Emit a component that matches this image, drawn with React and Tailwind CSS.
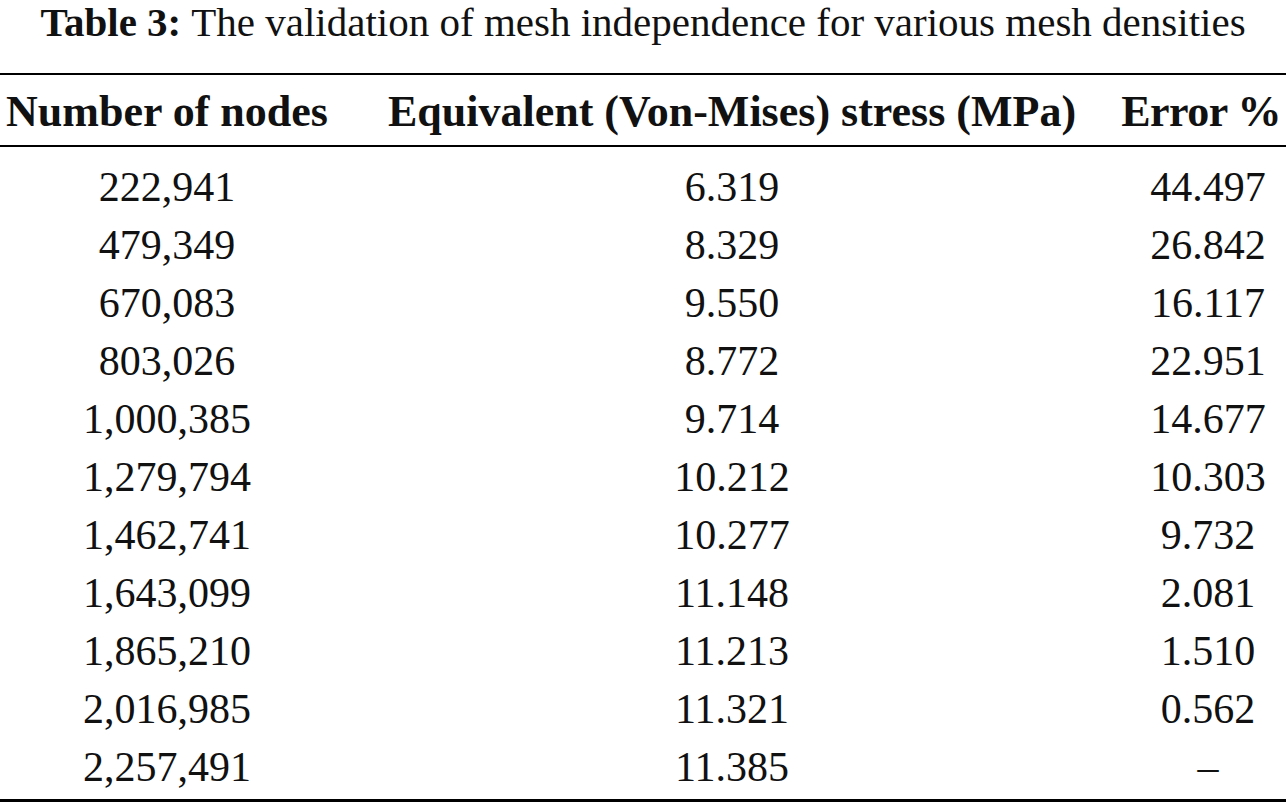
export default function App() {
  const rows = [
    ["222,941", "6.319", "44.497"],
    ["479,349", "8.329", "26.842"],
    ["670,083", "9.550", "16.117"],
    ["803,026", "8.772", "22.951"],
    ["1,000,385", "9.714", "14.677"],
    ["1,279,794", "10.212", "10.303"],
    ["1,462,741", "10.277", "9.732"],
    ["1,643,099", "11.148", "2.081"],
    ["1,865,210", "11.213", "1.510"],
    ["2,016,985", "11.321", "0.562"],
    ["2,257,491", "11.385", "–"],
  ];

  return (
    <div
      className="w-[1286px] h-[805px] bg-white text-[#111] overflow-hidden"
      style={{ fontFamily: '"Liberation Serif", "DejaVu Serif", serif' }}
    >
      {/* caption */}
      <div className="h-[73px] text-center text-[41px] leading-[44px] whitespace-nowrap">
        <span className="font-bold">Table 3:</span>
        <span className="ml-[10px]">The validation of mesh independence for various mesh densities</span>
      </div>

      {/* table */}
      <div className="border-t-[2px] border-b-[3px] border-black">
        <div className="grid grid-cols-[334px_1fr_156px] h-[72px] items-center text-[44px] leading-[60px] font-bold whitespace-nowrap border-b-[2px] border-black pt-[3px]">
          <div className="text-center">Number of nodes</div>
          <div className="text-center">Equivalent (Von-Mises) stress (MPa)</div>
          <div className="flex justify-end pr-[5px] tracking-[-0.5px]">Error %</div>
        </div>

        <div className="pt-[9px] pb-[5px] text-[42px]">
          {rows.map((r) => (
            <div key={r[0]} className="grid grid-cols-[334px_1fr_156px] h-[58px] items-center">
              <div className="text-center">{r[0]}</div>
              <div className="text-center">{r[1]}</div>
              <div className="text-center">{r[2]}</div>
            </div>
          ))}
        </div>
      </div>
    </div>
  );
}
